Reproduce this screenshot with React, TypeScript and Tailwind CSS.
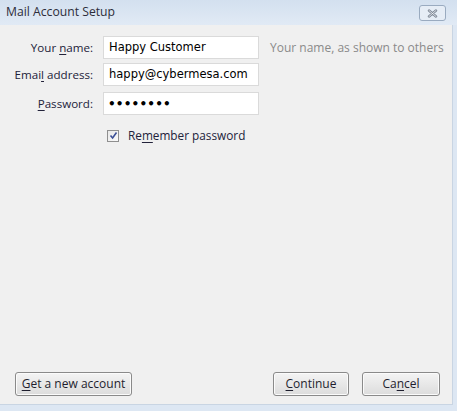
import React from "react";

const ui = { fontFamily: '"Open Sans", "Noto Sans", sans-serif' };
const field = { fontFamily: '"DejaVu Sans", Verdana, sans-serif' };

function Key({ children }: { children: React.ReactNode }) {
  return <span className="underline underline-offset-2">{children}</span>;
}

function Button({ children, className = "" }: { children: React.ReactNode; className?: string }) {
  return (
    <button
      className={
        "h-[24px] rounded-[3px] border border-[#8a8a8a] bg-gradient-to-b from-[#f4f4f4] to-[#dcdcdc] text-[12px] text-[#1e1e2e] shadow-[inset_0_0_0_1px_#fbfbfb] " +
        className
      }
      style={ui}
    >
      {children}
    </button>
  );
}

export default function App() {
  return (
    <div className="w-[457px] h-[411px] bg-[#dde7f3] flex flex-col overflow-hidden">
      <div className="h-[25px] shrink-0 flex items-center justify-between pl-[6px] pr-[11px] bg-gradient-to-b from-[#d3e0ef] to-[#e1eaf5]">
        <span className="text-[12.2px] text-[#2d2d3a]" style={ui}>
          Mail Account Setup
        </span>
        <div className="w-[27px] h-[16px] mt-[1px] rounded-[3px] border border-[#9aabc0] bg-[#e6edf6] flex items-center justify-center">
          <svg width="11" height="9" viewBox="0 0 11 9">
            <path d="M2 1.5 L9 7.5 M9 1.5 L2 7.5" stroke="#7d8795" strokeWidth="2.4" strokeLinecap="round" />
            <path d="M2 1.5 L9 7.5 M9 1.5 L2 7.5" stroke="#f2f4f7" strokeWidth="0.8" strokeLinecap="round" />
          </svg>
        </div>
      </div>

      <div className="flex-1 flex flex-col bg-[#f0f0f0] mr-[4px] mb-[6px] border-r border-b border-[#c9d5e3]">
        <div className="pt-[11px] flex flex-col gap-[4px]" style={ui}>
          <div className="flex items-center h-[23px]">
            <label className="w-[93px] text-right text-[11.6px] text-[#22223a]">
              Your <Key>n</Key>ame:
            </label>
            <div className="ml-[10px] w-[156px] h-[23px] bg-white border border-[#dadada] flex items-center pl-[5px] text-[11.5px] text-black" style={field}>
              Happy Customer
            </div>
            <span className="ml-[11px] text-[12px] text-[#8a8a8a]">Your name, as shown to others</span>
          </div>
          <div className="flex items-center h-[23px]">
            <label className="w-[93px] text-right text-[11.6px] text-[#22223a]">
              Emai<Key>l</Key> address:
            </label>
            <div className="ml-[10px] w-[156px] h-[23px] bg-white border border-[#dadada] flex items-center pl-[5px] text-[11.5px] text-black" style={field}>
              happy@cybermesa.com
            </div>
          </div>
          <div className="flex items-center h-[23px] mt-[2px]">
            <label className="w-[93px] text-right text-[11.6px] text-[#22223a]">
              <Key>P</Key>assword:
            </label>
            <div className="ml-[10px] w-[156px] h-[23px] bg-white border border-[#dadada] flex items-center pl-[4px] text-[12px] font-bold text-black tracking-[0.2px]" style={field}>
              ••••••••
            </div>
          </div>
          <div className="flex items-center mt-[8px] ml-[107px]">
            <div className="w-[12px] h-[12px] border border-[#8f8f8f] bg-gradient-to-br from-[#e8e8e8] to-[#fafafa] flex items-center justify-center">
              <svg width="9" height="9" viewBox="0 0 9 9">
                <path d="M1.5 4.5 L3.6 7 L7.5 1.5" fill="none" stroke="#3b4f96" strokeWidth="1.6" />
              </svg>
            </div>
            <span className="ml-[9px] text-[11.8px] text-[#22223a]">
              Re<Key>m</Key>ember password
            </span>
          </div>
        </div>

        <div className="mt-auto flex items-center pl-[15px] pr-[12px] pb-[8px]">
          <Button className="w-[117px]">
            <Key>G</Key>et a new account
          </Button>
          <div className="flex-1" />
          <Button className="w-[76px]">
            <Key>C</Key>ontinue
          </Button>
          <Button className="w-[78px] ml-[13px]">
            Ca<Key>n</Key>cel
          </Button>
        </div>
      </div>
    </div>
  );
}
